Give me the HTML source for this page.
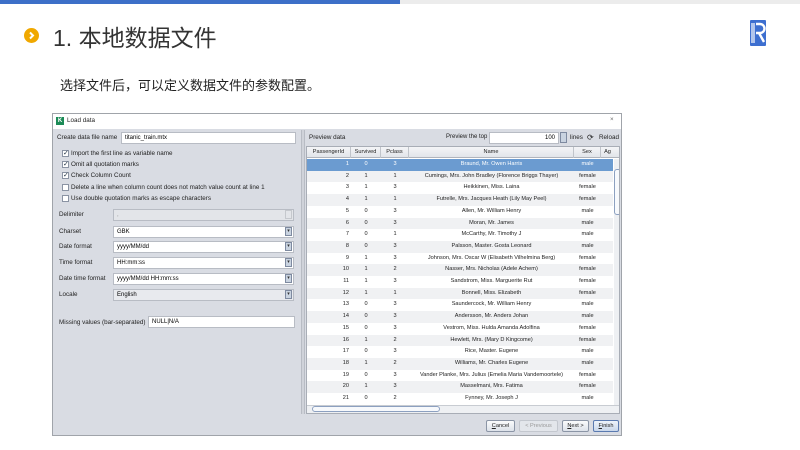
<!DOCTYPE html>
<html><head><meta charset="utf-8"><style>
*{margin:0;padding:0;box-sizing:border-box}
body{width:800px;height:450px;background:#fff;position:relative;overflow:hidden;font-family:"Liberation Sans",Arial,sans-serif}
.a{position:absolute}
.t{font-size:6.3px;color:#222;white-space:nowrap}
.inp{position:absolute;background:#fff;border:1px solid #b8bcc4;font-size:6px;padding-left:3px;line-height:10px;height:12px}
.dd{position:absolute;width:7px;height:9px;background:#c9d3e0;border:1px solid #7e8aa0;right:1px;top:0px;font-size:5px;line-height:7px;text-align:center;color:#333}
.cb{position:absolute;width:7px;height:7px;border:1px solid #8a93a3;background:#fff;font-size:7px;line-height:5px;text-align:center;color:#234}
.row{position:absolute;left:0;width:306px;height:11.7px;font-size:5.6px;color:#222;line-height:11.7px}
.row span{position:absolute;text-align:center;white-space:nowrap}
.btn{position:absolute;height:12px;border:1px solid #8b95a6;background:linear-gradient(#fafbfc,#dde2ea);border-radius:2px;font-size:5.6px;line-height:10px;text-align:center;color:#222}
</style></head><body>
<div class="a" style="left:0;top:0;width:400px;height:4px;background:#3d6fc8"></div>
<div class="a" style="left:400px;top:0;width:400px;height:4px;background:#ececec"></div>
<div class="a" style="left:24px;top:28px;width:15px;height:15px;border-radius:50%;background:#f0a800">
<svg width="15" height="15" viewBox="0 0 15 15"><path d="M6 4.5l3 3-3 3" stroke="#fff" stroke-width="2" fill="none"/></svg></div>
<div class="a" style="left:53px;top:19px;font-size:23px;color:#333;font-family:'Liberation Sans','Noto Sans CJK SC',sans-serif">1. 本地数据文件</div>
<div class="a" style="left:750px;top:20px;width:16px;height:26px;background:#3d6fd0;border-radius:1px">
<svg width="16" height="26" viewBox="0 0 16 26"><path d="M2 3v20M4 3v20" stroke="#fff" stroke-width="1.2"/><path d="M6 4h4a4 4 0 0 1 0 9h-4M9 13l5 9" stroke="#fff" stroke-width="2.4" fill="none"/></svg></div>
<div class="a" style="left:60px;top:75px;font-size:13px;color:#222;font-family:'Liberation Sans','Noto Sans CJK SC',sans-serif">选择文件后，可以定义数据文件的参数配置。</div>

<div class="a" style="left:52px;top:113px;width:570px;height:323px;background:#d9dce3;border:1px solid #a0a4aa"></div>
<div class="a" style="left:53px;top:114px;width:568px;height:15px;background:#fff"></div>
<div class="a" style="left:56px;top:117px;width:8px;height:8px;background:#1c8b57;color:#fff;font-size:6px;line-height:8px;text-align:center;font-weight:bold">K</div>
<div class="a t" style="left:67px;top:117px">Load data</div>
<div class="a t" style="left:610px;top:116px;color:#666">×</div>

<div class="a t" style="left:57px;top:134px">Create data file name</div>
<div class="inp" style="left:121px;top:132px;width:175px">titanic_train.mtx</div>
<div class="cb" style="left:62px;top:150px">✓</div><div class="a t" style="left:71px;top:150px">Import the first line as variable name</div>
<div class="cb" style="left:62px;top:161px">✓</div><div class="a t" style="left:71px;top:161px">Omit all quotation marks</div>
<div class="cb" style="left:62px;top:172px">✓</div><div class="a t" style="left:71px;top:172px">Check Column Count</div>
<div class="cb" style="left:62px;top:184px"></div><div class="a t" style="left:71px;top:184px">Delete a line when column count does not match value count at line 1</div>
<div class="cb" style="left:62px;top:195px"></div><div class="a t" style="left:71px;top:195px">Use double quotation marks as escape characters</div>

<div class="a t" style="left:59px;top:211px">Delimiter</div>
<div class="inp" style="left:113px;top:209px;width:181px;background:#e3e5e9;color:#999">,<div class="dd" style="background:#e3e5e9;border-color:#c5c8cd"></div></div>
<div class="a t" style="left:59px;top:228px">Charset</div>
<div class="inp" style="left:113px;top:226px;width:181px">GBK<div class="dd">▾</div></div>
<div class="a t" style="left:59px;top:243px">Date format</div>
<div class="inp" style="left:113px;top:241px;width:181px">yyyy/MM/dd<div class="dd">▾</div></div>
<div class="a t" style="left:59px;top:259px">Time format</div>
<div class="inp" style="left:113px;top:257px;width:181px">HH:mm:ss<div class="dd">▾</div></div>
<div class="a t" style="left:59px;top:275px">Date time format</div>
<div class="inp" style="left:113px;top:273px;width:181px">yyyy/MM/dd HH:mm:ss<div class="dd">▾</div></div>
<div class="a t" style="left:59px;top:291px">Locale</div>
<div class="inp" style="left:113px;top:289px;width:181px;background:#e8eaee">English<div class="dd">▾</div></div>
<div class="a t" style="left:59px;top:319px">Missing values (bar-separated)</div>
<div class="inp" style="left:148px;top:316px;width:147px">NULL|N/A</div>

<div class="a" style="left:301px;top:130px;width:4px;height:284px;background:#d0d3da;border-left:1px solid #b8bcc4;border-right:1px solid #b8bcc4"></div>

<div class="a t" style="left:309px;top:134px">Preview data</div>
<div class="a t" style="left:446px;top:134px;font-size:6px">Preview the top</div>
<div class="inp" style="left:489px;top:132px;width:70px;text-align:right;padding-right:3px">100</div>
<div class="a" style="left:560px;top:132px;width:7px;height:11px;background:#c9d3e0;border:1px solid #7e8aa0"></div>
<div class="a t" style="left:570px;top:134px">lines</div>
<div class="a t" style="left:587px;top:133px;font-size:8px">⟳</div>
<div class="a t" style="left:599px;top:134px">Reload</div>

<div class="a" style="left:306px;top:146px;width:314px;height:268px;background:#fff;border:1px solid #a8adb6;overflow:hidden">
<div class="a" style="left:0;top:0;width:314px;height:11px;background:linear-gradient(#f4f5f7,#e2e5ea);border-bottom:1px solid #b0b4bc;font-size:5.6px;line-height:11px;color:#222">
<span class="a" style="left:0;width:44px;text-align:center;border-right:1px solid #c0c4ca">PassengerId</span>
<span class="a" style="left:44px;width:30px;text-align:center;border-right:1px solid #c0c4ca">Survived</span>
<span class="a" style="left:74px;width:28px;text-align:center;border-right:1px solid #c0c4ca">Pclass</span>
<span class="a" style="left:102px;width:165px;text-align:center;border-right:1px solid #c0c4ca">Name</span>
<span class="a" style="left:267px;width:27px;text-align:center;border-right:1px solid #c0c4ca">Sex</span>
<span class="a" style="left:294px;width:13px;text-align:center">Ag</span>
</div>
<div class="a" style="left:0;top:12px;width:307px;height:246px" id="rows"></div>
<div class="a" style="left:307px;top:12px;width:7px;height:246px;background:#eef0f3"><div class="a" style="left:0;top:10px;width:7px;height:46px;border:1px solid #8ca0c0;border-radius:3px;background:#f7f9fc"></div></div>
<div class="a" style="left:0;top:258px;width:314px;height:8px;background:#eef0f3;border-top:1px solid #c8ccd2"><div class="a" style="left:5px;top:0;width:128px;height:6px;border:1px solid #8ca0c0;border-radius:3px;background:#f7f9fc"></div></div>
</div>

<div class="btn" style="left:486px;top:420px;width:29px"><u>C</u>ancel</div>
<div class="btn" style="left:519px;top:420px;width:39px;color:#999;border-color:#c3c7ce;background:#e3e6eb">&lt; Previous</div>
<div class="btn" style="left:562px;top:420px;width:27px"><u>N</u>ext &gt;</div>
<div class="btn" style="left:593px;top:420px;width:26px;border-color:#5a7ab0;background:linear-gradient(#eef3fa,#c9d7ea)"><u>F</u>inish</div>

<script>
var d=[[1,0,3,"Braund, Mr. Owen Harris","male"],[2,1,1,"Cumings, Mrs. John Bradley (Florence Briggs Thayer)","female"],[3,1,3,"Heikkinen, Miss. Laina","female"],[4,1,1,"Futrelle, Mrs. Jacques Heath (Lily May Peel)","female"],[5,0,3,"Allen, Mr. William Henry","male"],[6,0,3,"Moran, Mr. James","male"],[7,0,1,"McCarthy, Mr. Timothy J","male"],[8,0,3,"Palsson, Master. Gosta Leonard","male"],[9,1,3,"Johnson, Mrs. Oscar W (Elisabeth Vilhelmina Berg)","female"],[10,1,2,"Nasser, Mrs. Nicholas (Adele Achem)","female"],[11,1,3,"Sandstrom, Miss. Marguerite Rut","female"],[12,1,1,"Bonnell, Miss. Elizabeth","female"],[13,0,3,"Saundercock, Mr. William Henry","male"],[14,0,3,"Andersson, Mr. Anders Johan","male"],[15,0,3,"Vestrom, Miss. Hulda Amanda Adolfina","female"],[16,1,2,"Hewlett, Mrs. (Mary D Kingcome)","female"],[17,0,3,"Rice, Master. Eugene","male"],[18,1,2,"Williams, Mr. Charles Eugene","male"],[19,0,3,"Vander Planke, Mrs. Julius (Emelia Maria Vandemoortele)","female"],[20,1,3,"Masselmani, Mrs. Fatima","female"],[21,0,2,"Fynney, Mr. Joseph J","male"]];
var h="";d.forEach(function(r,i){var bg=i==0?"#6b9bd0":(i%2?"#f0f1f3":"#fff");var c=i==0?"#fff":"#222";
h+='<div class="row" style="top:'+(i*11.7)+'px;background:'+bg+';color:'+c+'"><span style="left:0;width:42px;text-align:right">'+r[0]+'</span><span style="left:44px;width:30px">'+r[1]+'</span><span style="left:74px;width:28px">'+r[2]+'</span><span style="left:102px;width:165px">'+r[3]+'</span><span style="left:267px;width:27px">'+r[4]+'</span></div>';});
document.getElementById("rows").innerHTML=h;
</script>
</body></html>
